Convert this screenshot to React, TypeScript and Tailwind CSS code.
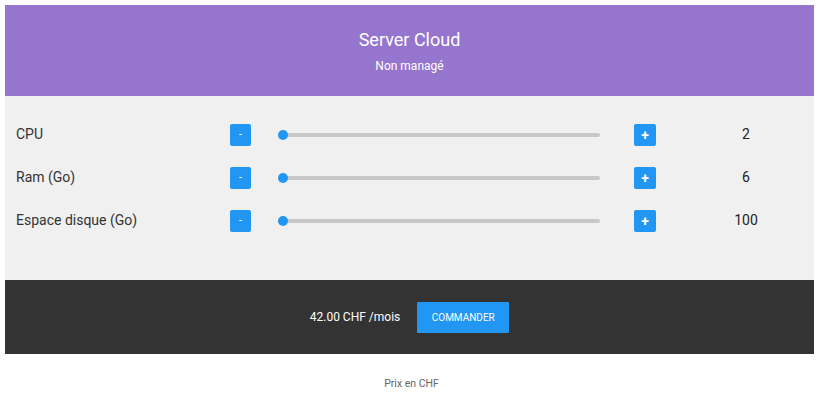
import { useState } from 'react';

type Row = { label: string; value: number; min: number; max: number };

function Stepper({ row, onChange }: { row: Row; onChange: (v: number) => void }) {
  const pct = ((row.value - row.min) / (row.max - row.min)) * 100;
  return (
    <div className="flex items-center h-[43px]">
      <div className="w-[214px] text-[14px] text-[#333]">{row.label}</div>
      <button
        className="w-[21px] h-[22px] rounded-[2px] bg-[#2196f3] text-white text-[11px] leading-none flex items-center justify-center"
        onClick={() => onChange(Math.max(row.min, row.value - 1))}
      >
        -
      </button>
      <div className="relative ml-[27px] w-[322px] h-[10px] flex items-center">
        <div className="w-full h-[4px] rounded-full bg-[#c8c8c8]" />
        <div
          className="absolute top-0 w-[10px] h-[10px] rounded-full bg-[#2196f3]"
          style={{ left: `calc(${pct}% * 0.97)` }}
        />
      </div>
      <button
        className="ml-[34px] w-[22px] h-[22px] rounded-[2px] bg-[#2196f3] text-white text-[14px] font-bold leading-none flex items-center justify-center"
        onClick={() => onChange(Math.min(row.max, row.value + 1))}
      >
        +
      </button>
      <div className="ml-[45px] w-[90px] text-center text-[14px] text-[#222]">{row.value}</div>
    </div>
  );
}

export default function App() {
  const [rows, setRows] = useState<Row[]>([
    { label: 'CPU', value: 2, min: 2, max: 32 },
    { label: 'Ram (Go)', value: 6, min: 6, max: 128 },
    { label: 'Espace disque (Go)', value: 100, min: 100, max: 2000 },
  ]);

  return (
    <div className="bg-white min-h-[399px] pt-[5px] font-['Roboto',sans-serif]">
      <div className="ml-[5px] w-[809px]">
        {/* Header */}
        <div className="bg-[#9575cd] h-[91px] flex flex-col items-center pt-[24px] text-white">
          <h1 className="text-[18px] leading-[22px]">Server Cloud</h1>
          <p className="mt-[8px] text-[12px] leading-[14px]">Non managé</p>
        </div>

        {/* Sliders */}
        <div className="bg-[#f0f0f0] h-[184px] pt-[17px] pl-[11px]">
          {rows.map((row, i) => (
            <Stepper
              key={row.label}
              row={row}
              onChange={(v) => setRows(rows.map((r, j) => (j === i ? { ...r, value: v } : r)))}
            />
          ))}
        </div>

        {/* Footer */}
        <div className="bg-[#333333] h-[74px] flex items-center justify-center gap-[17px]">
          <span className="text-white text-[12px]">42.00 CHF /mois</span>
          <button className="bg-[#2196f3] text-white text-[10px] uppercase w-[92px] h-[31px] rounded-[1px]">
            Commander
          </button>
        </div>
      </div>
      <p className="mt-[22px] text-center text-[10.5px] text-[#666]">Prix en CHF</p>
    </div>
  );
}
